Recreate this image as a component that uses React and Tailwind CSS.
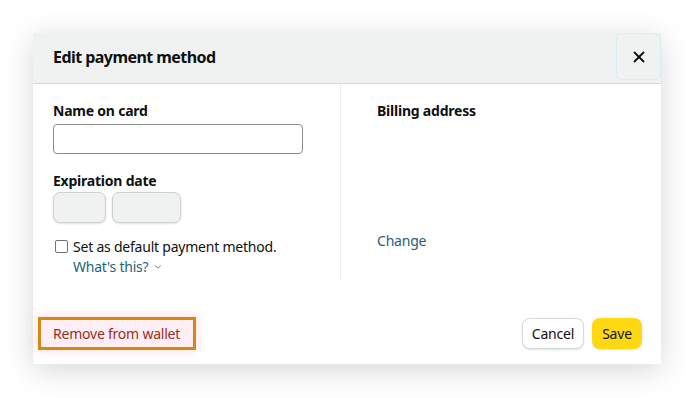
import React from 'react';
import { X, ChevronDown } from 'lucide-react';

export default function App() {
    return (
        <div className="w-[693px] h-[398px] bg-white pt-[33px] pl-[33px] font-['Noto_Sans',sans-serif] text-[#0f1111] tracking-[-0.22px]">
            {/* Modal */}
            <div className="w-[628px] h-[331px] bg-white flex flex-col shadow-[0_6px_28px_rgba(0,0,0,0.16)]">
                {/* Header */}
                <div className="h-[51px] bg-[#f0f2f2] border-b border-[#d5d9d9] flex justify-between">
                    <h2 className="pl-[20px] pt-[13px] text-[16px] font-bold leading-[22px] tracking-[-0.55px]">Edit payment method</h2>
                    <button className="w-[45px] h-[47px] border border-[#d8ecf4] rounded-[6px] flex items-center justify-center">
                        <X size={18} strokeWidth={2.4} />
                    </button>
                </div>

                {/* Body */}
                <div className="flex flex-1">
                    {/* Left column */}
                    <div className="w-[308px] pl-[20px] pt-[18px] border-r border-[#eceeee] h-[196px]">
                        <label className="block text-[14px] font-bold leading-[18px]">Name on card</label>
                        <input
                            type="text"
                            className="mt-[4px] w-[250px] h-[30px] border border-[#888c8c] rounded-[4px] outline-none px-2"
                        />
                        <label className="block mt-[18px] text-[14px] font-bold leading-[18px]">Expiration date</label>
                        <div className="mt-[2px] flex gap-[6px]">
                            <div className="w-[53px] h-[31px] bg-[#f0f2f2] border border-[#cdd1d1] rounded-[7px] shadow-[0_1px_2px_rgba(15,17,17,0.12)]" />
                            <div className="w-[69px] h-[31px] bg-[#f0f2f2] border border-[#cdd1d1] rounded-[7px] shadow-[0_1px_2px_rgba(15,17,17,0.12)]" />
                        </div>
                        <div className="mt-[14px] flex items-start gap-[5px] pl-[2px]">
                            <span className="mt-[3px] w-[13px] h-[13px] border border-[#6f7373] rounded-[2px] bg-white" />
                            <div className="text-[14px] leading-[20px]">
                                <div>Set as default payment method.</div>
                                <div className="flex items-center gap-[5px] text-[#1f6378]">
                                    What's this?
                                    <ChevronDown size={10} strokeWidth={2} className="text-[#565959]" />
                                </div>
                            </div>
                        </div>
                    </div>

                    {/* Right column */}
                    <div className="pl-[36px] pt-[18px] flex flex-col">
                        <div className="text-[14px] font-bold leading-[18px]">Billing address</div>
                        <a className="mt-[111px] text-[14px] leading-[20px] text-[#2b5b78]">Change</a>
                    </div>
                </div>

                {/* Footer */}
                <div className="flex items-center justify-between pl-[5px] pr-[19px] pb-[14px]">
                    <button className="h-[33px] w-[158px] border-[3px] border-[#d38a10] bg-[#fdeef6] shadow-[0_0_10px_rgba(255,140,140,0.35)] text-[14px] text-[#9a2e16] text-left pl-[12px]">
                        Remove from wallet
                    </button>
                    <div className="flex gap-[8px]">
                        <button className="w-[62px] h-[31px] bg-white border border-[#d5d9d9] rounded-[8px] text-[14px] shadow-[0_1px_2px_rgba(15,17,17,0.12)]">Cancel</button>
                        <button className="w-[50px] h-[31px] bg-[#ffd814] rounded-[8px] text-[14px] shadow-[0_1px_2px_rgba(15,17,17,0.12)]">Save</button>
                    </div>
                </div>
            </div>
        </div>
    );
}
